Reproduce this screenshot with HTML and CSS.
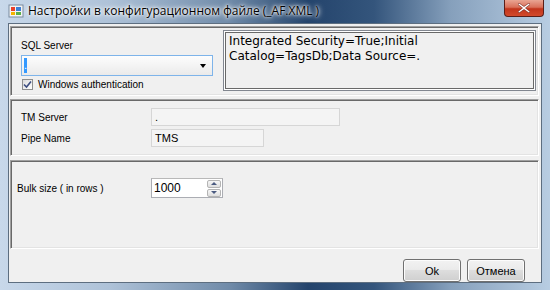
FILE: index.html
```html
<!DOCTYPE html>
<html>
<head>
<meta charset="utf-8">
<link rel="stylesheet" href="styles.css">
</head>
<body>
<div class="window">
  <div class="titlebar">
    <svg class="app-icon" width="16" height="16" viewBox="0 0 16 16">
      <rect x="1" y="2" width="14" height="12" fill="#f4f4f4" stroke="#7a8ba0"/>
      <rect x="3" y="4" width="4" height="4" fill="#e8402a"/>
      <rect x="8" y="4" width="5" height="4" fill="#3c7fd6"/>
      <rect x="3" y="9" width="4" height="3" fill="#f4b400"/>
      <rect x="8" y="9" width="5" height="3" fill="#5bb04a"/>
    </svg>
    <span class="title">Настройки в конфигурационном файле (_AF.XML )</span>
    <div class="close-btn">
      <svg width="12" height="10" viewBox="0 0 12 10"><path d="M1 0 L6 3.5 L11 0 L12 1.5 L7.5 5 L12 8.5 L11 10 L6 6.5 L1 10 L0 8.5 L4.5 5 L0 1.5 Z" fill="#fff" stroke="#6a1a10" stroke-width="0.6"/></svg>
    </div>
  </div>
  <div class="client">
    <div class="panel panel-sql">
      <div class="sql-left">
        <div class="label">SQL Server</div>
        <div class="combo">
          <span class="combo-text">.</span>
          <span class="combo-arrow"></span>
        </div>
        <label class="check">
          <span class="checkbox">
            <svg width="9" height="9" viewBox="0 0 9 9"><path d="M1 4.5 L3.5 7 L8 1.5" fill="none" stroke="#3c4d80" stroke-width="1.6"/></svg>
          </span>
          <span>Windows authentication</span>
        </label>
      </div>
      <div class="connstr">Integrated Security=True;Initial<br>Catalog=TagsDb;Data Source=.</div>
    </div>
    <div class="panel panel-tm">
      <div class="row">
        <span class="label label-w">TM Server</span>
        <div class="textbox tb-server">.</div>
      </div>
      <div class="row">
        <span class="label label-w">Pipe Name</span>
        <div class="textbox tb-pipe">TMS</div>
      </div>
    </div>
    <div class="panel panel-bulk">
      <div class="row">
        <span class="label label-bulk">Bulk size ( in rows )</span>
        <div class="numeric">
          <span class="num-text">1000</span>
          <div class="spin">
            <div class="spin-btn"><span class="tri up"></span></div>
            <div class="spin-btn"><span class="tri down"></span></div>
          </div>
        </div>
      </div>
    </div>
    <div class="buttons">
      <button class="btn">Ok</button>
      <button class="btn">Отмена</button>
    </div>
  </div>
</div>
</body>
</html>
```

FILE: styles.css
```css
html, body {
  margin: 0;
  padding: 0;
  width: 550px;
  height: 290px;
  overflow: hidden;
}
.window {
  width: 550px;
  height: 290px;
  box-sizing: border-box;
  background: linear-gradient(90deg, #c8d8ea 0%, #aec2d8 20%, #6f8aa8 42%, #24446c 56%, #34557c 68%, #86a0bc 82%, #b8cde2 100%);
  display: flex;
  flex-direction: column;
  padding: 0 8px 7px 8px;
  font-family: "Liberation Sans", Arial, sans-serif;
  font-size: 10px;
  color: #000;
}
.titlebar {
  height: 23px;
  display: flex;
  align-items: center;
  position: relative;
  flex: none;
}
.app-icon {
  margin: 0 4px 2px 0;
}
.title {
  font-family: "Open Sans", "Liberation Sans", sans-serif;
  font-size: 12px;
  color: #000;
  text-shadow: 0 0 6px #fff, 0 0 4px #fff, 0 0 2px #fff;
  margin-bottom: 2px;
}
.close-btn {
  position: absolute;
  right: -2px;
  top: 0;
  width: 40px;
  height: 17px;
  box-sizing: border-box;
  border: 1px solid #5b1e18;
  border-top: none;
  border-radius: 0 0 4px 4px;
  background: linear-gradient(180deg, #e9a593 0%, #d9705a 45%, #c2351c 55%, #d24a2c 100%);
  display: flex;
  align-items: center;
  justify-content: center;
}
.client {
  flex: 1;
  background: #f0f0f0;
  border: 1px solid #5d6e80;
  display: flex;
  flex-direction: column;
  padding: 2px 2px 0 1px;
}
.panel {
  border-top: 1px solid #a0a0a0;
  border-left: 1px solid #a0a0a0;
  border-bottom: 1px solid #fff;
  border-right: 1px solid #fff;
  box-shadow: inset 1px 1px 0 #696969, inset -1px -1px 0 #e3e3e3;
  box-sizing: border-box;
}
.panel-sql {
  height: 70px;
  display: flex;
  padding: 3px 2px 4px 10px;
  gap: 10px;
}
.sql-left {
  width: 192px;
  display: flex;
  flex-direction: column;
}
.label {
  white-space: nowrap;
}
.sql-left .label {
  margin-top: 9px;
  height: 14px;
  line-height: 14px;
}
.combo {
  margin-top: 2px;
  height: 22px;
  box-sizing: border-box;
  border: 1px solid #7eb4ea;
  background: linear-gradient(180deg, #fdfdfd 0%, #f4f4f4 50%, #eaeaea 100%);
  display: flex;
  align-items: center;
  padding: 0 2px;
}
.combo-text {
  background: #3399ff;
  color: #fff;
  width: 3px;
  height: 15px;
  line-height: 15px;
  overflow: hidden;
  font-size: 11px;
}
.combo-arrow {
  margin-left: auto;
  margin-right: 4px;
  width: 0;
  height: 0;
  border-left: 3.5px solid transparent;
  border-right: 3.5px solid transparent;
  border-top: 4px solid #000;
}
.check {
  display: flex;
  align-items: center;
  margin-top: 2px;
  gap: 5px;
  height: 13px;
}
.checkbox {
  width: 11px;
  height: 11px;
  box-sizing: border-box;
  border: 1px solid #8e8f8f;
  background: linear-gradient(135deg, #dcdcdc, #fff);
  display: flex;
  align-items: center;
  justify-content: center;
  margin-left: 1px;
}
.connstr {
  flex: 1;
  height: 61px;
  box-sizing: border-box;
  border: 1px solid #828790;
  box-shadow: inset 0 0 0 1px #fff, inset 0 0 0 2px #696969;
  background: #f0f0f0;
  font-family: "DejaVu Sans", Verdana, sans-serif;
  font-size: 12px;
  line-height: 15px;
  padding: 3px 5px;
  color: #000;
}
.panel-tm {
  height: 57px;
  margin-top: 3px;
  padding: 8px 0 0 10px;
  display: flex;
  flex-direction: column;
  gap: 3px;
}
.row {
  display: flex;
  align-items: center;
}
.label-w {
  width: 130px;
}
.textbox {
  height: 18px;
  box-sizing: border-box;
  border: 1px solid #d6d6d6;
  background: #f4f4f4;
  padding: 2px 3px;
  line-height: 13px;
  font-size: 11px;
}
.tb-server { width: 189px; }
.tb-pipe { width: 113px; }
.panel-bulk {
  height: 89px;
  margin-top: 4px;
  padding: 17px 0 0 6px;
}
.label-bulk {
  width: 134px;
}
.numeric {
  width: 72px;
  height: 20px;
  box-sizing: border-box;
  border: 1px solid #abadb3;
  border-top-color: #b8b8b8;
  background: #fff;
  display: flex;
  align-items: center;
  padding-left: 2px;
}
.num-text {
  font-size: 12px;
  flex: 1;
}
.spin {
  width: 14px;
  height: 17px;
  display: flex;
  flex-direction: column;
  gap: 1px;
  margin-right: 1px;
}
.spin-btn {
  flex: 1;
  border: 1px solid #b4b4b4;
  border-radius: 2px;
  background: linear-gradient(180deg, #f6f6f6, #dedede);
  display: flex;
  align-items: center;
  justify-content: center;
}
.tri {
  width: 0;
  height: 0;
  border-left: 3px solid transparent;
  border-right: 3px solid transparent;
}
.tri.up { border-bottom: 3px solid #4a5a80; }
.tri.down { border-top: 3px solid #4a5a80; }
.buttons {
  display: flex;
  justify-content: flex-end;
  gap: 6px;
  margin-top: 10px;
  padding-right: 14px;
}
.btn {
  width: 58px;
  height: 23px;
  box-sizing: border-box;
  border: 1px solid #707070;
  border-radius: 3px;
  background: linear-gradient(180deg, #f2f2f2 0%, #ebebeb 45%, #dddddd 50%, #cfcfcf 100%);
  box-shadow: inset 0 0 0 1px #fcfcfc;
  font-family: "Liberation Sans", Arial, sans-serif;
  font-size: 11px;
  color: #000;
  padding: 0;
}
```
